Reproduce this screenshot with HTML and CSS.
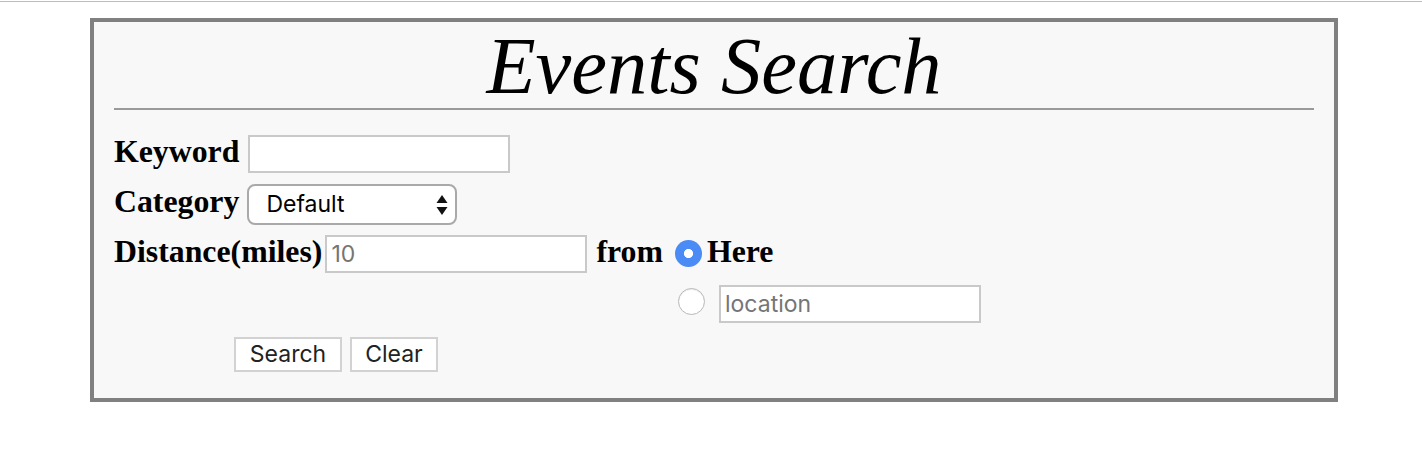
FILE: index.html
```html
<!DOCTYPE html>
<html>
<head>
<meta charset="utf-8">
<link rel="stylesheet" href="styles.css">
</head>
<body>
<div class="topline"></div>
<div class="panel">
  <h1 class="title">Events Search</h1>
  <div class="rule"></div>
  <form class="form">
    <div class="row">
      <label class="lbl" for="kw">Keyword</label>
      <input id="kw" class="txt kw" type="text">
    </div>
    <div class="row">
      <label class="lbl" for="cat">Category</label>
      <span class="selwrap">
        <select id="cat" class="sel"><option>Default</option></select>
        <svg class="arrows" width="12" height="21" viewBox="0 0 12 21"><path d="M6 0 L11.5 8 L0.5 8 Z" fill="#111"/><path d="M0.5 12 L11.5 12 L6 20 Z" fill="#111"/></svg>
      </span>
    </div>
    <div class="row">
      <label class="lbl" for="dist">Distance(miles)</label>
      <input id="dist" class="txt dist" type="text" placeholder="10">
      <span class="lbl from">from</span>
      <input id="here" class="radio on" type="radio" name="loc" checked>
      <label class="lbl here" for="here">Here</label>
    </div>
    <div class="row">
      <input class="radio off" type="radio" name="loc">
      <input class="txt loc" type="text" placeholder="location">
    </div>
    <div class="row">
      <button type="button" class="btn search">Search</button>
      <button type="button" class="btn clear">Clear</button>
    </div>
  </form>
</div>
</body>
</html>
```
FILE: styles.css
```css
html, body {
  margin: 0;
  padding: 0;
  background: #ffffff;
}
.topline {
  margin-top: 1px;
  border-top: 1px solid #bdbdbd;
}
.panel {
  box-sizing: border-box;
  width: 1248px;
  margin: 16px 0 0 90px;
  border: 4px solid #808080;
  background: #f8f8f8;
  padding: 4px 20px 19px 20px;
}
.title {
  margin: 0;
  font-family: "Liberation Serif", "Times New Roman", serif;
  font-style: italic;
  font-weight: normal;
  font-size: 80.5px;
  line-height: 79px;
  text-align: center;
  color: #000;
}
.rule {
  margin-top: 3px;
  height: 2px;
  background: #9a9a9a;
}
.form {
  margin: 19px 0 0 0;
}
.row {
  display: flex;
  align-items: center;
  height: 50px;
}
.lbl {
  font-family: "Liberation Serif", "Times New Roman", serif;
  font-weight: bold;
  font-size: 31.8px;
  line-height: 36px;
  padding-bottom: 5px;
  color: #000;
  white-space: nowrap;
}
.txt {
  box-sizing: border-box;
  width: 262px;
  height: 38px;
  margin: 0;
  border: 2px solid #c9c9c9;
  background: #fff;
  padding: 0 4px;
  font-family: Inter, "Liberation Sans", Arial, sans-serif;
  font-size: 23px;
  color: #000;
  outline: none;
}
.txt::placeholder {
  color: #757575;
}
.kw { margin-left: 9px; }
.dist { margin-left: 3px; }
.from { margin-left: 9px; }
.here { margin-left: 5px; }
.loc { margin-left: 14px; }
.selwrap {
  position: relative;
  margin-left: 8px;
  display: inline-block;
  height: 41px;
}
.sel {
  -webkit-appearance: none;
  appearance: none;
  box-sizing: border-box;
  width: 210px;
  height: 41px;
  margin: 0;
  border: 2px solid #a9a9a9;
  border-radius: 8px;
  background: #fff;
  padding: 0 0 0 17px;
  font-family: Inter, "Liberation Sans", Arial, sans-serif;
  font-size: 23px;
  color: #000;
  outline: none;
}
.arrows {
  position: absolute;
  left: 189px;
  top: 11px;
  pointer-events: none;
}
.radio {
  -webkit-appearance: none;
  appearance: none;
  box-sizing: border-box;
  width: 27px;
  height: 27px;
  border-radius: 50%;
  margin: 0;
  padding: 0;
  outline: none;
}
.radio.on {
  margin-left: 12px;
  margin-bottom: 2px;
  background: #4a8bf5;
  border: none;
  background-image: radial-gradient(circle, #ffffff 0, #ffffff 4.2px, #4a8bf5 5px);
}
.radio.off {
  margin-left: 564px;
  margin-bottom: 6px;
  background: #fff;
  border: 1px solid #b8b8b8;
  box-shadow: inset 0 1px 1px rgba(0,0,0,0.08);
}
.btn {
  box-sizing: border-box;
  height: 35px;
  margin: 0;
  padding: 0;
  border: 2px solid #d2d2d2;
  background: #fff;
  font-family: Inter, "Liberation Sans", Arial, sans-serif;
  font-size: 23px;
  color: #222;
}
.search {
  width: 108px;
  margin-left: 120px;
}
.clear {
  width: 88px;
  margin-left: 8px;
}
```
